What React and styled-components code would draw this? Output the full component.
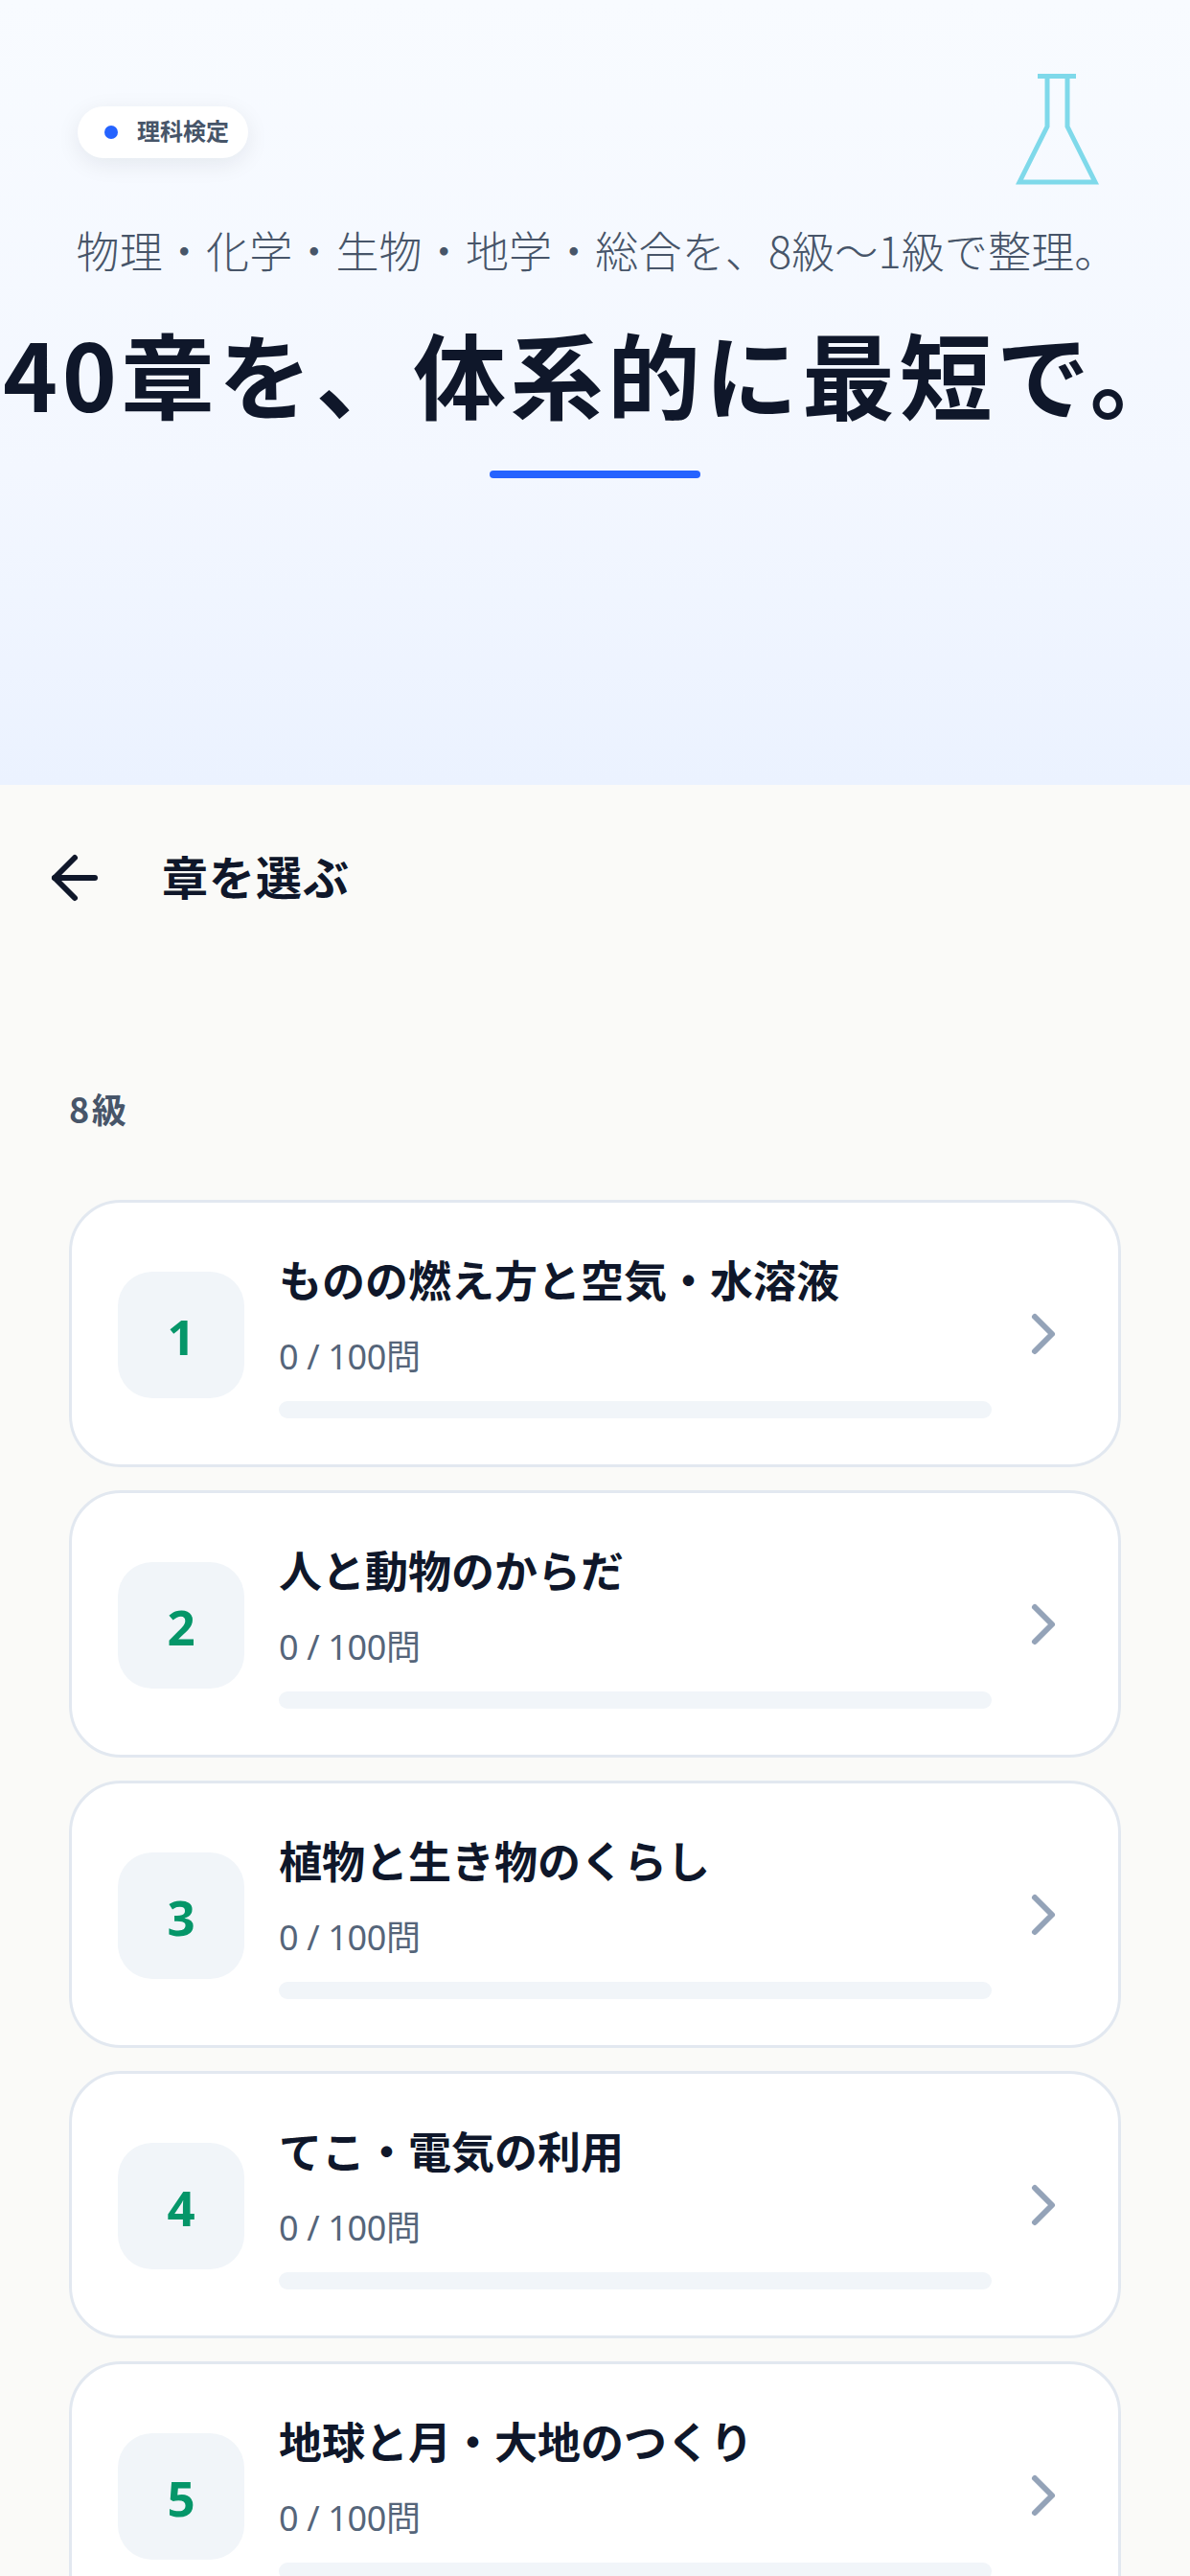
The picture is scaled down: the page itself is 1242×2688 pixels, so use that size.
import React from "react";
import styled, { createGlobalStyle } from "styled-components";
import { ArrowLeft, ChevronRight } from "lucide-react";

const cjk = `"Noto Sans CJK JP", "Noto Sans", sans-serif`;
const latin = `"Noto Sans", "Noto Sans CJK JP", sans-serif`;

const Global = createGlobalStyle`
  html, body { margin: 0; padding: 0; background: #fafaf8; }
  html, body, #root { height: 2688px; overflow: hidden; }
  * { box-sizing: border-box; }
  body { font-family: ${cjk}; }
`;
const Page = styled.div`
  width: 1242px;
  height: 2688px;
  overflow: hidden;
  background: #fafaf8;
`;
const Hero = styled.header`
  position: relative;
  height: 819px;
  padding-top: 111px;
  background: linear-gradient(180deg, #f8fbff 0%, #f3f7ff 60%, #ebf2ff 100%);
  display: flex;
  flex-direction: column;
  align-items: center;
`;
const FlaskMark = styled.svg`
  position: absolute;
  left: 1060px;
  top: 76px;
  width: 88px;
  height: 117px;
`;
const PillRow = styled.div`
  width: 100%;
  padding-left: 81px;
  display: flex;
`;
const Pill = styled.div`
  height: 54px;
  width: 178px;
  border-radius: 27px;
  background: #fff;
  box-shadow: 0 6px 24px rgba(15, 23, 42, 0.08);
  display: flex;
  align-items: center;
  gap: 20px;
  padding-left: 28px;
  font-size: 24px;
  font-weight: 600;
  color: #475569;
`;
const PillLabel = styled.span`
  padding-bottom: 5px;
`;
const Dot = styled.span`
  width: 14px;
  height: 14px;
  border-radius: 50%;
  background: #2563ff;
`;
const Sub = styled.p`
  margin: 66px 0 0;
  padding-left: 4px;
  font-size: 45px;
  line-height: 60px;
  letter-spacing: 0.15px;
  font-weight: 300;
  color: #475569;
  white-space: nowrap;
`;
const Title = styled.h1`
  margin: 37px 0 0;
  font-size: 97px;
  line-height: 120px;
  font-weight: 700;
  letter-spacing: 4.5px;
  color: #0f172a;
  white-space: nowrap;
`;
const Rule = styled.div`
  margin-top: 43px;
  width: 220px;
  height: 8px;
  border-radius: 4px;
  background: #2563ff;
`;
const TopBar = styled.div`
  display: flex;
  align-items: center;
  gap: 55px;
  padding: 61px 0 0 42px;
  color: #0f172a;
`;
const BarTitle = styled.h2`
  margin: -6px 0 0;
  font-size: 48px;
  line-height: 72px;
  font-weight: 700;
  letter-spacing: 1px;
  color: #0f172a;
`;
const Section = styled.section`
  padding: 0 72px;
`;
const Grade = styled.h3`
  margin: 180px 0 0;
  font-size: 36px;
  line-height: 48px;
  font-weight: 600;
  letter-spacing: 2.5px;
  color: #475569;
`;
const List = styled.div`
  margin-top: 72px;
  display: flex;
  flex-direction: column;
  gap: 24px;
`;
const Card = styled.div`
  height: 279px;
  flex: none;
  background: #fff;
  border: 3px solid #e2e8f0;
  border-radius: 54px;
  padding: 0 42px 0 48px;
  display: flex;
  align-items: center;
  gap: 36px;
`;
const Tile = styled.div`
  flex: none;
  margin-top: 3px;
  width: 132px;
  height: 132px;
  border-radius: 36px;
  background: #f1f5f9;
  display: flex;
  align-items: center;
  justify-content: center;
  padding-top: 2px;
  font-family: ${latin};
  font-size: 51px;
  font-weight: 700;
  color: #059669;
`;
const Body = styled.div`
  flex: 1;
  min-width: 0;
`;
const Name = styled.div`
  font-size: 45px;
  line-height: 64px;
  font-weight: 700;
  color: #0f172a;
  white-space: nowrap;
`;
const Meta = styled.div`
  margin-top: 28px;
  font-family: ${latin};
  font-size: 36px;
  line-height: 42px;
  letter-spacing: -0.35px;
  color: #55657a;
`;
const Track = styled.div`
  margin-top: 25px;
  height: 18px;
  border-radius: 9px;
  background: #f1f5f9;
`;
const Chevron = styled(ChevronRight)`
  flex: none;
  margin-left: -18px;
  color: #94a3b8;
`;

const chapters = [
  "ものの燃え方と空気・水溶液",
  "人と動物のからだ",
  "植物と生き物のくらし",
  "てこ・電気の利用",
  "地球と月・大地のつくり",
];

export default function App() {
  return (
    <Page>
      <Global />
      <Hero>
        <FlaskMark viewBox="0 0 88 117" fill="none" stroke="#7fd9ea" strokeWidth="5">
          <path d="M23 3.5H63M33 3.5V56L4 114H83L54 56V3.5" />
        </FlaskMark>
        <PillRow>
          <Pill>
            <Dot />
            <PillLabel>理科検定</PillLabel>
          </Pill>
        </PillRow>
        <Sub>物理・化学・生物・地学・総合を、8級〜1級で整理。</Sub>
        <Title>40章を、体系的に最短で。</Title>
        <Rule />
      </Hero>
      <TopBar>
        <ArrowLeft size={72} strokeWidth={2} />
        <BarTitle>章を選ぶ</BarTitle>
      </TopBar>
      <Section>
        <Grade>8級</Grade>
        <List>
          {chapters.map((c, i) => (
            <Card key={c}>
              <Tile>{i + 1}</Tile>
              <Body>
                <Name>{c}</Name>
                <Meta>0 / 100問</Meta>
                <Track />
              </Body>
              <Chevron size={72} strokeWidth={2} />
            </Card>
          ))}
        </List>
      </Section>
    </Page>
  );
}
